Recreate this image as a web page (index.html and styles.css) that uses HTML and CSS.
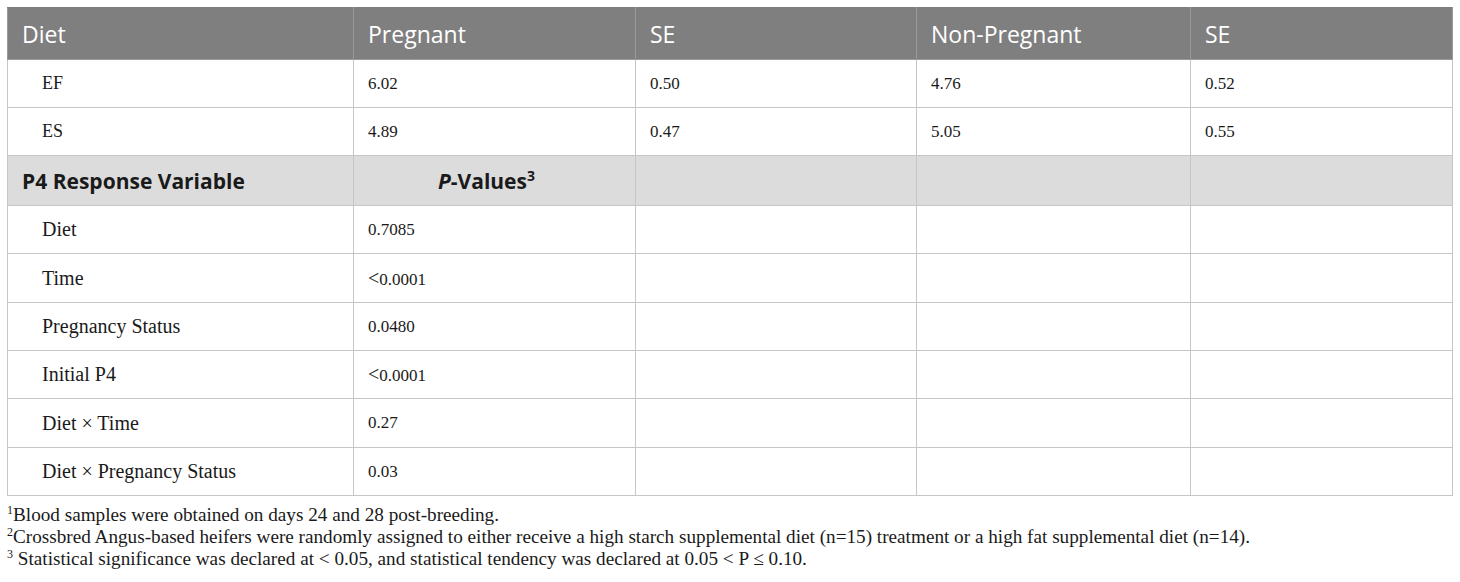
FILE: index.html
```html
<!DOCTYPE html>
<html>
<head>
<meta charset="utf-8">
<link rel="stylesheet" href="styles.css">
</head>
<body>
<div class="wrap">
<table class="data">
  <colgroup>
    <col class="c1"><col class="c2"><col class="c3"><col class="c4"><col class="c5">
  </colgroup>
  <thead>
    <tr class="head">
      <th>Diet</th><th>Pregnant</th><th>SE</th><th>Non-Pregnant</th><th>SE</th>
    </tr>
  </thead>
  <tbody>
    <tr><td class="ind">EF</td><td>6.02</td><td>0.50</td><td>4.76</td><td>0.52</td></tr>
    <tr><td class="ind">ES</td><td>4.89</td><td>0.47</td><td>5.05</td><td>0.55</td></tr>
    <tr class="sub"><td>P4 Response Variable</td><td class="ctr"><i>P</i>-Values<sup>3</sup></td><td></td><td></td><td></td></tr>
    <tr><td class="ind lab">Diet</td><td>0.7085</td><td></td><td></td><td></td></tr>
    <tr class="tall"><td class="ind lab">Time</td><td><span class="lt">&lt;</span>0.0001</td><td></td><td></td><td></td></tr>
    <tr><td class="ind lab">Pregnancy Status</td><td>0.0480</td><td></td><td></td><td></td></tr>
    <tr><td class="ind lab">Initial P4</td><td><span class="lt">&lt;</span>0.0001</td><td></td><td></td><td></td></tr>
    <tr class="tall"><td class="ind lab">Diet × Time</td><td>0.27</td><td></td><td></td><td></td></tr>
    <tr><td class="ind lab">Diet × Pregnancy Status</td><td>0.03</td><td></td><td></td><td></td></tr>
  </tbody>
</table>
<div class="notes">
  <p><sup>1</sup>Blood samples were obtained on days 24 and 28 post-breeding.</p>
  <p><sup>2</sup>Crossbred Angus-based heifers were randomly assigned to either receive a high starch supplemental diet (n=15) treatment or a high fat supplemental diet (n=14).</p>
  <p><sup>3</sup> Statistical significance was declared at &lt; 0.05, and statistical tendency was declared at 0.05 &lt; P ≤ 0.10.</p>
</div>
</div>
</body>
</html>
```
FILE: styles.css
```css
html, body {
  margin: 0;
  padding: 0;
  background: #ffffff;
}
.wrap {
  padding: 7px 0 0 7px;
}
.data {
  border-collapse: collapse;
  table-layout: fixed;
  width: 1445px;
  font-family: "Liberation Serif", "Times New Roman", serif;
  font-size: 17px;
  color: #1a1a1a;
}
.c1 { width: 346px; }
.c2 { width: 282px; }
.c3 { width: 281px; }
.c4 { width: 274px; }
.c5 { width: 262px; }
.data th, .data td {
  border: 1px solid #c6c6c6;
  padding: 0 14px;
  text-align: left;
  vertical-align: middle;
}
.head th {
  background: #7f7f7f;
  color: #ffffff;
  font-family: "Open Sans", "Noto Sans", sans-serif;
  font-weight: 400;
  font-size: 23px;
  height: 51px;
  border-color: #9a9a9a;
  border-top-color: #7f7f7f;
}
.data td {
  height: 47px;
}
.data tr.tall td {
  height: 48px;
}
.data td.ind {
  padding-left: 34px;
  font-size: 18px;
}
.data td.lab {
  font-size: 20px;
}
.lt {
  font-size: 20px;
}
.sub td {
  background: #dcdcdc;
  height: 49px;
  font-family: "Open Sans", "Noto Sans", sans-serif;
  font-weight: 700;
  font-size: 21px;
  color: #1a1a1a;
}
.sub td.ctr {
  text-align: center;
  padding-right: 30px;
}
.sub sup {
  font-size: 14px;
  line-height: 0;
}
.notes {
  font-family: "Liberation Serif", "Times New Roman", serif;
  font-size: 19.2px;
  color: #1a1a1a;
  padding-top: 8px;
}
.notes p {
  margin: 0;
  line-height: 22px;
}
.notes sup {
  font-size: 12px;
  line-height: 0;
}
```
